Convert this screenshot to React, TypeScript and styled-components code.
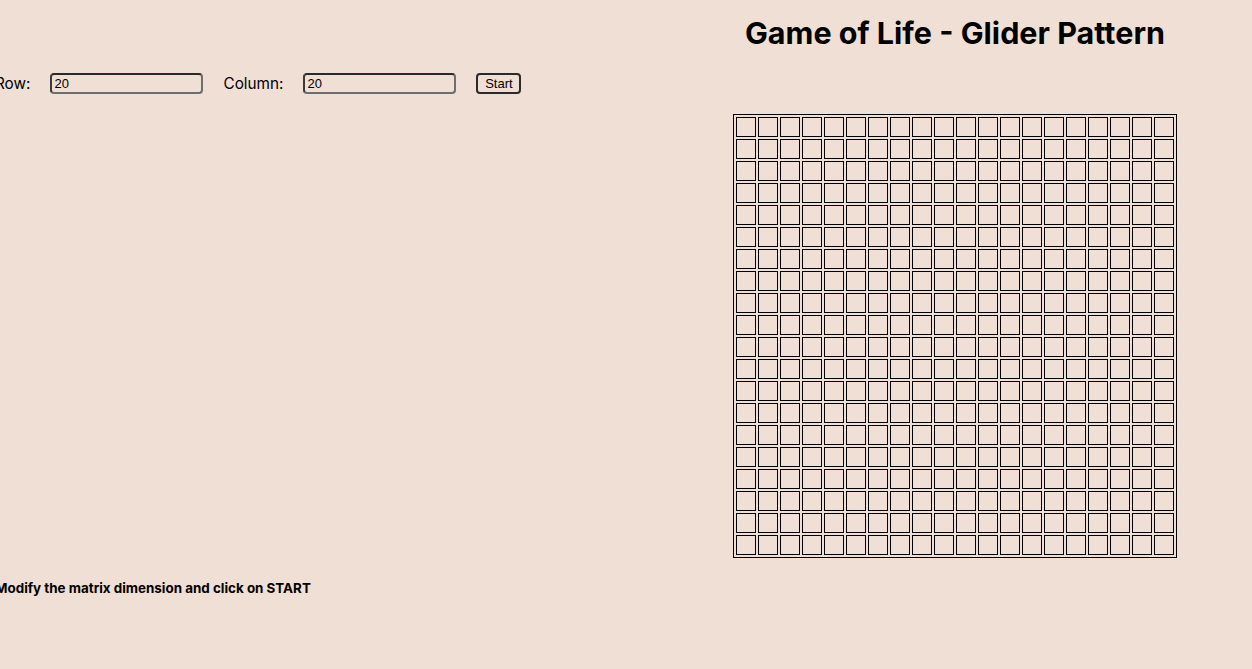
import React, { useState } from "react";
import styled, { createGlobalStyle } from "styled-components";

const Global = createGlobalStyle`
  html, body { margin: 0; padding: 0; }
  body {
    background: #f0dfd4;
    font-family: Inter, "Noto Sans", sans-serif;
    color: #000;
    overflow: hidden;
  }
`;

const Page = styled.div`
  display: flex;
  width: 1252px;
  height: 669px;
`;

const LeftPanel = styled.div`
  width: 738px;
  margin-left: -5px;
  display: flex;
  flex-direction: column;
  padding-top: 72px;
  box-sizing: border-box;
`;

const Controls = styled.div`
  display: flex;
  align-items: center;
  gap: 20px;
  height: 22px;
`;

const Label = styled.label`
  font-size: 15.3px;
  font-family: Inter, sans-serif;
`;

const NumberInput = styled.input`
  box-sizing: border-box;
  width: 153px;
  height: 21px;
  border: 2px solid #6e6e6e;
  border-top-color: #2a2a2a;
  border-left-color: #3a3a3a;
  border-radius: 4px;
  background: transparent;
  font-family: "Liberation Sans", Arial, sans-serif;
  font-size: 13px;
  padding: 0 2px;
  color: #000;
  outline: none;
`;

const StartButton = styled.button`
  box-sizing: border-box;
  width: 45px;
  height: 21px;
  border: 2px solid #2a2a2a;
  border-radius: 4px;
  background: transparent;
  font-family: "Liberation Sans", Arial, sans-serif;
  font-size: 13px;
  padding: 0;
  color: #000;
`;

const Hint = styled.p`
  margin: 0;
  margin-top: 486px;
  font-size: 13.4px;
  font-weight: 700;
  line-height: 16px;
`;

const RightPanel = styled.div`
  width: 444px;
  display: flex;
  flex-direction: column;
  align-items: center;
`;

const Title = styled.h1`
  margin: 0;
  padding-top: 14px;
  font-size: 30.5px;
  font-weight: 700;
  line-height: 38px;
  white-space: nowrap;
`;

const Board = styled.table`
  margin-top: 62px;
  border: 1px solid #000;
  border-spacing: 2px;
  border-collapse: separate;
`;

const Cell = styled.td<{ $alive: boolean }>`
  box-sizing: border-box;
  width: 20px;
  height: 20px;
  padding: 0;
  border: 1.5px solid #000;
  background: ${(p) => (p.$alive ? "#000" : "transparent")};
`;

export default function App() {
  const [rows, setRows] = useState("20");
  const [cols, setCols] = useState("20");
  const r = 20;
  const c = 20;
  const grid = Array.from({ length: r }, () => Array.from({ length: c }, () => false));

  return (
    <>
      <Global />
      <Page>
        <LeftPanel>
          <Controls>
            <Label>Row:</Label>
            <NumberInput value={rows} onChange={(e) => setRows(e.target.value)} />
            <Label>Column:</Label>
            <NumberInput value={cols} onChange={(e) => setCols(e.target.value)} />
            <StartButton>Start</StartButton>
          </Controls>
          <Hint>Modify the matrix dimension and click on START</Hint>
        </LeftPanel>
        <RightPanel>
          <Title>Game of Life - Glider Pattern</Title>
          <Board>
            <tbody>
              {grid.map((row, i) => (
                <tr key={i}>
                  {row.map((alive, j) => (
                    <Cell key={j} $alive={alive} />
                  ))}
                </tr>
              ))}
            </tbody>
          </Board>
        </RightPanel>
      </Page>
    </>
  );
}
